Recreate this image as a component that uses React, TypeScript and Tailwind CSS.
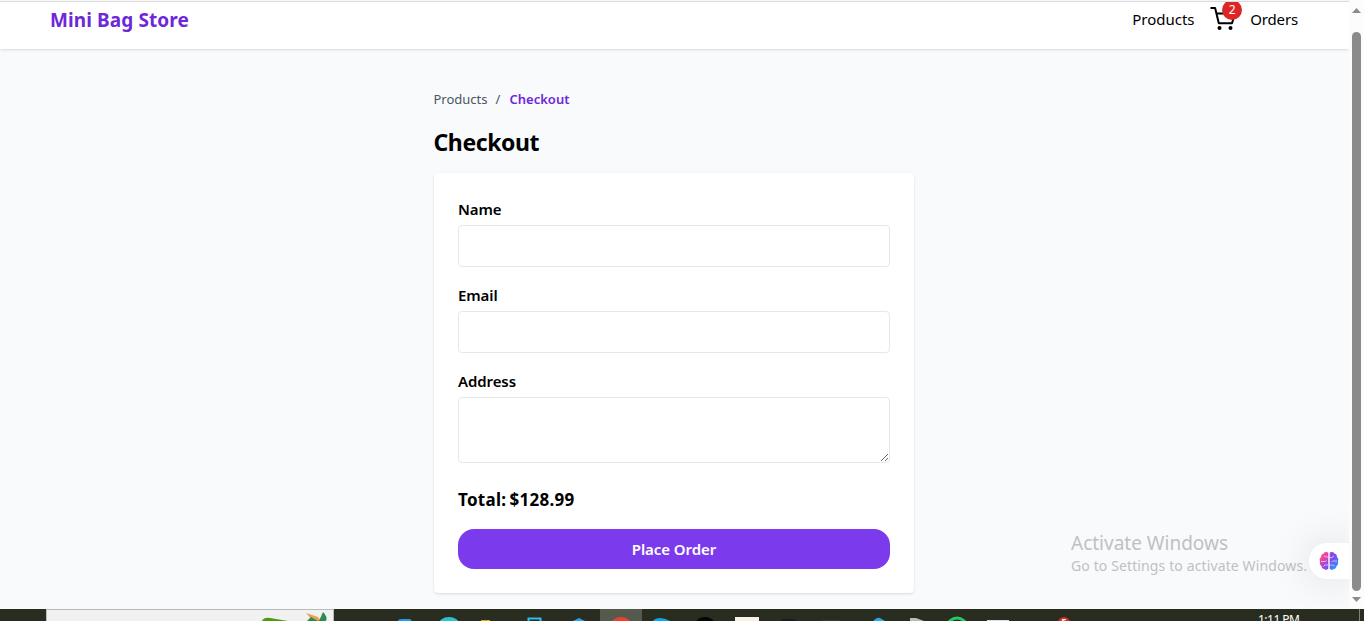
function Field({ label, area }: { label: string; area?: boolean }) {
  return (
    <label className="block">
      <span className="mb-1 block h-6 text-[15px] font-semibold leading-6 tracking-[-0.1px]">{label}</span>
      {area ? (
        <textarea className="block h-[66px] w-full rounded border border-gray-200 bg-white" />
      ) : (
        <input className="block h-[42px] w-full rounded border border-gray-200 bg-white px-3" />
      )}
    </label>
  );
}

function Header() {
  return (
    <header className="relative z-10 mt-px flex h-12 shrink-0 items-start justify-between overflow-visible border-t border-[#dadce0] bg-white pl-[50px] pr-[51px] shadow">
      <div className="mt-1 text-[19px] font-bold leading-7 tracking-[0.1px] text-[#6d28d9]">Mini Bag Store</div>
      <nav className="flex h-10 overflow-hidden pt-[5px] text-[15px] leading-6">
        <a className="-ml-px w-[78px]">Products</a>
        <a className="relative w-10">
          <svg className="-mt-[3px] block" width="26" height="28" viewBox="0 0 26 28" fill="none" stroke="black" strokeWidth="2" strokeLinejoin="round">
            <path d="M.5 4h4.600l3.700 15.200h13.200l3-9.700H6.500" />
            <circle cx="9.500" cy="24" r="2" fill="black" stroke="none" />
            <circle cx="20.500" cy="24" r="2" fill="black" stroke="none" />
          </svg>
          <span className="absolute -top-[7px] left-3 flex h-5 w-5 items-center justify-center rounded-full bg-[#dc2626] text-xs text-white">2</span>
        </a>
        <a className="tracking-[-0.15px]">Orders</a>
      </nav>
    </header>
  );
}

function Scrollbar() {
  return (
    <div className="flex h-[608px] w-[15px] shrink-0 flex-col items-center bg-[#fcfcfc] pt-2">
      <svg width="9" height="5"><path d="M4.500 0L9 5H0z" fill="#8b8b8b" /></svg>
      <div className="mt-[19px] h-[559px] w-[9px] rounded-full bg-[#8b8b8b]" />
      <svg className="mt-[6px]" width="9" height="5"><path d="M0 0h9L4.500 5z" fill="#8b8b8b" /></svg>
    </div>
  );
}

function BrainIcon() {
  return (
    <svg width="20" height="20" viewBox="0 0 20 20" fill="none">
      <defs>
        <linearGradient id="brain-left" x1="0" y1="0" x2=".6" y2="1">
          <stop stopColor="#ff8038" /><stop offset=".4" stopColor="#f0449b" /><stop offset="1" stopColor="#7c4df3" />
        </linearGradient>
        <linearGradient id="brain-right" x1="0" y1="0" x2=".6" y2="1">
          <stop stopColor="#a63df0" /><stop offset=".5" stopColor="#7a4df3" /><stop offset="1" stopColor="#19a5ff" />
        </linearGradient>
      </defs>
      <path d="M9.300 1.500v16.300q-2 2-4 .2-2.600 0-2.700-2.700Q.2 13.800 1 10-.2 8.500 2 6 2 3 4.500 2.500 6 .2 9.300 1.500z" fill="url(#brain-left)" />
      <path d="M10.700 1.500v16.300q2 2 4 .2 2.600 0 2.700-2.700 2.400-1.500 1.600-5.300 1.200-1.500-1-4 0-3-2.500-3.500-1.500-2.300-4.800-1z" fill="url(#brain-right)" />
      <path d="M9.500 6H7L5 5M2 10.500h4l1.500-1M9 14H6l-1.500 1.500M10.500 6.500H13l2-1.500M18 10h-4l-1.500 1M11 14h3l1.500 1" stroke="white" strokeOpacity=".6" />
    </svg>
  );
}

function Taskbar() {
  return (
    <footer className="flex h-3 overflow-hidden bg-[#292d20]">
      <svg width="1364" height="12">
        <rect x="46.500" y=".5" width="287" height="15" fill="#f1f1f1" stroke="#b9bcba" />
        <path d="M262 12q2-4 8-3l18 3z" fill="#4c9a10" />
        <path d="M306 4l12 4 3 4h-8z" fill="#e9a34c" />
        <path d="M323 3q5 5 3 9h-7zM307 12l4-4 7 4z" fill="#2c8b51" />
        <path d="M398 12q0-2 4-2h8l2 2z" fill="#269af3" />
        <ellipse cx="449" cy="16" rx="10.500" ry="8" fill="#2ec2c9" />
        <path d="M481 11h9v1h-9z" fill="#eaa600" />
        <path d="M528.500 13V9.500h12V13" fill="none" stroke="#31b9f2" strokeWidth="2" />
        <path d="M573 12l6-3 6 3z" fill="#2aa2ed" />
        <rect x="600" width="42" height="12" fill="#565a4d" />
        <ellipse cx="621" cy="16" rx="10" ry="8" fill="#ec4030" />
        <path d="M653 12q2-3 7-3t10 3z" fill="#08a7ef" />
        <ellipse cx="705" cy="16" rx="10" ry="8" fill="#050606" />
        <rect x="735" y="8" width="24" height="4" fill="#f9f1e4" />
        <path d="M780 12q2-2 4-2h10l4 2z" fill="#101f29" />
        <path d="M822 11h18v1h-18z" fill="#383638" />
        <path d="M873 12q4-4 7-3l5 3z" fill="#22a9f2" />
        <path d="M910 9h6l8 3h-14z" fill="#b9bdb9" />
        <ellipse cx="957" cy="17" rx="9" ry="8" fill="none" stroke="#25c963" strokeWidth="3" />
        <path d="M987 11h22v1h-22z" fill="#ddddea" />
        <circle cx="1064" cy="14" r="6" fill="#cf3327" />
        <path d="M1359.500 0v12" stroke="#818379" />
        <text x="1061.500" y="16" fontSize="9" fontWeight="700" fill="white">5</text>
        <text x="1258" y="15" fontSize="12" textLength="42" fill="white">1:11 PM</text>
      </svg>
    </footer>
  );
}

export default function App() {
  return (
    <div className="h-[621px] w-[1364px] overflow-hidden bg-[#f9fafb] font-['Noto_Sans',sans-serif] text-black">
      <div className="flex h-[609px]">
        <div className="relative flex min-w-0 flex-1 flex-col overflow-hidden">
          <Header />
          <main className="ml-[434px] w-[480px] pt-10">
            <nav className="-ml-[0.5px] flex h-5 text-[13px] leading-5 text-gray-600">
              <span className="w-[62px]">Products</span>
              <span className="w-[14px]">/</span>
              <span className="font-semibold text-[#6d28d9]">Checkout</span>
            </nav>
            <h1 className="-ml-[0.5px] mt-[17px] h-8 text-[23px] font-bold leading-8 tracking-[-0.4px]">Checkout</h1>
            <form className="mt-[15px] h-[420px] rounded bg-white p-6 shadow">
              <div className="flex flex-col gap-4">
                <Field label="Name" />
                <Field label="Email" />
                <Field label="Address" area />
              </div>
              <p className="mt-[23px] h-7 text-[17px] font-bold leading-7 tracking-[0.28px] [word-spacing:-1.5px]">Total: $128.99</p>
              <button type="button" className="mt-[15px] block h-10 w-full rounded-2xl bg-[#7c3aed] text-[15px] font-semibold tracking-[-0.05px] text-white">Place Order</button>
            </form>
          </main>
          <div className="absolute left-[1071px] top-[530px] whitespace-nowrap text-[#bfc1c1]">
            <p className="text-[19px] leading-[26px]">Activate Windows</p>
            <p className="text-[14px] leading-5 tracking-[0.12px]">Go to Settings to activate Windows.</p>
          </div>
          <div className="absolute right-0 top-[543px] flex h-9 w-10 items-center rounded-l-full bg-white pl-[10px] shadow-[0_0_40px_#00000020]">
            <BrainIcon />
          </div>
        </div>
        <Scrollbar />
      </div>
      <Taskbar />
    </div>
  );
}
